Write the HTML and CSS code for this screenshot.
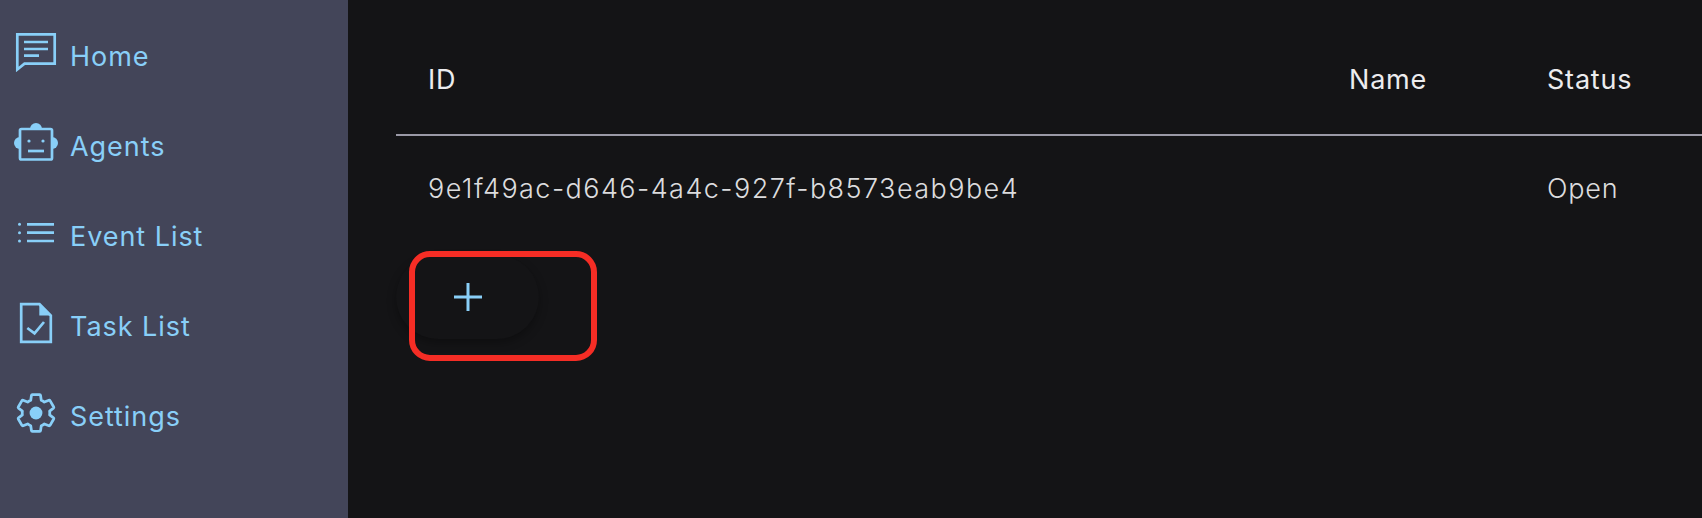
FILE: index.html
```html
<!DOCTYPE html>
<html>
<head>
<meta charset="UTF-8">
<title>Agents</title>
<link rel="stylesheet" href="styles.css">
</head>
<body>
	<div class="sidebar">
		<a class="nav-item" href="#">
			<svg class="icon" viewBox="0 0 44 44">
				<path d="M3.3 3.3H40.7V32.7H10.5L3.3 38.5Z"/>
				<path d="M10 11H34M10 18H34M10 24.7H25"/>
			</svg>
			<span>Home</span>
		</a>
		<a class="nav-item" href="#">
			<svg class="icon" viewBox="0 0 44 44">
				<circle class="solid" cx="22" cy="8" r="6"/>
				<circle class="solid" cx="6" cy="22" r="6"/>
				<circle class="solid" cx="38" cy="22" r="6"/>
				<rect class="head" x="6" y="8" width="32" height="30.5" rx="1.5"/>
				<circle class="solid" cx="15" cy="20" r="1.6"/>
				<circle class="solid" cx="29" cy="20" r="1.6"/>
				<path d="M14 30H30"/>
			</svg>
			<span>Agents</span>
		</a>
		<a class="nav-item" href="#">
			<svg class="icon" viewBox="0 0 44 44">
				<path d="M13 13.3H40M13 21.7H40M13 30H40"/>
				<circle class="solid" cx="5.5" cy="13.3" r="1.5"/>
				<circle class="solid" cx="5.5" cy="21.7" r="1.5"/>
				<circle class="solid" cx="5.5" cy="30" r="1.5"/>
			</svg>
			<span>Event List</span>
		</a>
		<a class="nav-item" href="#">
			<svg class="icon" viewBox="0 0 44 44">
				<path d="M7.2 3.2H25.5L36.8 14.5V40.8H7.2Z"/>
				<path class="solid" d="M25.3 3V14.6H37.5Z"/>
				<path d="M13.3 27L20.5 32.3L30 21"/>
			</svg>
			<span>Task List</span>
		</a>
		<a class="nav-item" href="#">
			<svg class="icon" viewBox="0 0 24 24">
				<path class="gear" d="M19.43 12.98c.04-.32.07-.64.07-.98 0-.34-.03-.66-.07-.98l2.11-1.65c.19-.15.24-.42.12-.64l-2-3.46c-.09-.16-.26-.25-.44-.25-.06 0-.12.01-.17.03l-2.49 1c-.52-.4-1.08-.73-1.69-.98l-.38-2.65C14.46 2.18 14.25 2 14 2h-4c-.25 0-.46.18-.49.42l-.38 2.65c-.61.25-1.17.59-1.69.98l-2.49-1c-.06-.02-.12-.03-.18-.03-.17 0-.34.09-.43.25l-2 3.46c-.13.22-.07.49.12.64l2.11 1.65c-.04.32-.07.65-.07.98 0 .33.03.66.07.98l-2.11 1.65c-.19.15-.24.42-.12.64l2 3.46c.09.16.26.25.44.25.06 0 .12-.01.17-.03l2.49-1c.52.4 1.08.73 1.69.98l.38 2.65c.03.24.24.42.49.42h4c.25 0 .46-.18.49-.42l.38-2.65c.61-.25 1.17-.59 1.69-.98l2.49 1c.06.02.12.03.18.03.17 0 .34-.09.43-.25l2-3.46c.12-.22.07-.49-.12-.64l-2.11-1.65z"/>
				<circle class="solid" cx="12" cy="12" r="3.5"/>
			</svg>
			<span>Settings</span>
		</a>
	</div>

	<div class="main">
		<table class="table">
			<tr>
				<th class="col-id">ID</th>
				<th class="col-name">Name</th>
				<th>Status</th>
			</tr>
			<tr>
				<td class="uuid">9e1f49ac-d646-4a4c-927f-b8573eab9be4</td>
				<td></td>
				<td>Open</td>
			</tr>
		</table>

		<div class="add-wrap">
			<button class="add-btn" type="button">
				<svg class="plus" viewBox="0 0 28 28"><path d="M14 0V28M0 14H28"/></svg>
			</button>
			<div class="highlight"></div>
		</div>
	</div>
</body>
</html>
```

FILE: styles.css
```css
*{margin: 0;padding: 0;box-sizing: border-box;}
html, body{height: 100%;overflow: hidden;}
body{display: flex;background: #141416;font-family: "Inter", "Liberation Sans", sans-serif;}

.sidebar{width: 348px;flex-shrink: 0;padding-top: 11px;background: #434559;}
.nav-item{display: flex;align-items: center;gap: 12px;height: 90px;padding-left: 14px;color: #89cff8;font-size: 27px;letter-spacing: .95px;text-decoration: none;}
.icon{width: 44px;height: 44px;margin-bottom: 6px;fill: none;stroke: #89cff8;stroke-width: 2.7;}
.icon .solid{fill: #89cff8;stroke: none;}
.icon .head{fill: #434559;}
.icon .gear{stroke-width: 1.5;stroke-linejoin: round;}

.main{flex: 1;min-width: 0;padding: 24px 0 0 48px;}
.table{width: 100%;border-collapse: collapse;table-layout: fixed;color: #dcdcde;font-size: 27px;letter-spacing: .8px;text-align: left;}
.table th{height: 111px;padding: 0 0 0 32px;border-bottom: 2px solid #9a99a6;font-weight: 400;vertical-align: middle;color: #ececee;}
.table td{height: 107px;padding: 0 0 2px 32px;font-weight: 300;}
.table .uuid{letter-spacing: 1.44px;}
.col-id{width: 921px;}
.col-name{width: 198px;}

.add-wrap{position: relative;margin-top: 9px;padding-top: 4px;width: 201px;height: 110px;}
.add-btn{display: flex;align-items: center;justify-content: center;width: 143px;height: 84px;border: 0;border-radius: 42px;background: #141416;box-shadow: 0 4px 10px rgba(0, 0, 0, .3);}
.plus{width: 28px;height: 28px;fill: none;stroke: #89cff8;stroke-width: 3;}
.highlight{position: absolute;left: 13px;top: 0;width: 188px;height: 110px;border: 6px solid #f52d25;border-radius: 21px;}
```
